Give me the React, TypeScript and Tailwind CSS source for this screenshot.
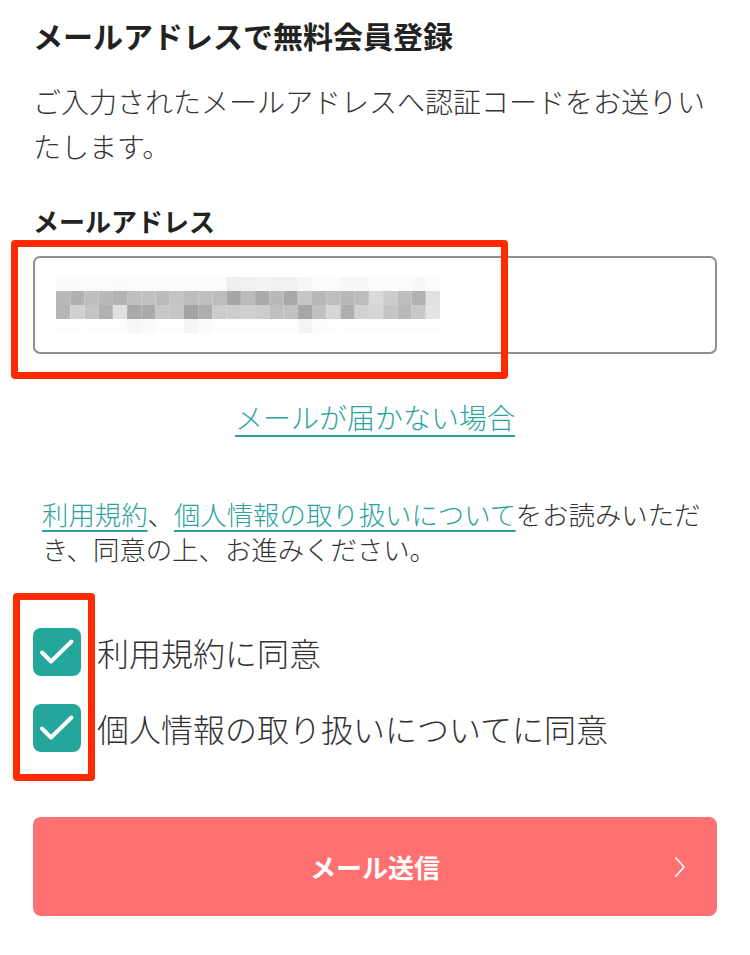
const MOSAIC_ROWS: string[][] = [
  ["#fafafa", "#fafafa", "#fbfbfb", "#fbfbfb", "#fafafa", "#fbfbfb", "#fbfbfb", "#fbfbfb", "#fcfcfc", "#fbfbfb", "#fbfbfb", "#fbfbfb", "#eeeeee", "#f0f0f0", "#f2f2f2", "#f1f1f1", "#f0f0f0", "#f6f6f6", "#fbfbfb", "#fbfbfb", "#f6f6f6", "#f7f7f7", "#fbfbfb", "#fbfbfb", "#fbfbfb", "#f8f8f8", "#fcfcfc"],
  ["#b8b8b8", "#b0b0b0", "#bdbdbd", "#b9b9b9", "#b3b3b3", "#bebebe", "#c0c0c0", "#bbbbbb", "#c4c4c4", "#bcbcbc", "#bfbfbf", "#bcbcbc", "#a6a6a6", "#bcbcbc", "#aaaaaa", "#b9b9b9", "#a8a8a8", "#c6c6c6", "#b8b8b8", "#bebebe", "#b9b9b9", "#bdbdbd", "#dadada", "#cccccc", "#bdbdbd", "#b1b1b1", "#e0e0e0"],
  ["#b5b5b5", "#d0d0d0", "#c3c3c3", "#b1b1b1", "#e0e0e0", "#a9a9a9", "#aaaaaa", "#c8c8c8", "#c6c6c6", "#a3a3a3", "#aeaeae", "#cbcbcb", "#cdcdcd", "#cfcfcf", "#cccccc", "#bfbfbf", "#c1c1c1", "#a7a7a7", "#c1c1c1", "#d6d6d6", "#aeaeae", "#d2d2d2", "#d6d6d6", "#c4c4c4", "#b8b8b8", "#c8c8c8", "#e4e4e4"],
  ["#fdfdfd", "#fdfdfd", "#fdfdfd", "#fdfdfd", "#fdfdfd", "#f6f6f6", "#fafafa", "#fdfdfd", "#fdfdfd", "#f5f5f5", "#fafafa", "#fdfdfd", "#fdfdfd", "#fdfdfd", "#fdfdfd", "#fdfdfd", "#fdfdfd", "#f4f4f4", "#fbfbfb", "#fdfdfd", "#fdfdfd", "#fdfdfd", "#fdfdfd", "#fdfdfd", "#fdfdfd", "#fdfdfd", "#fdfdfd"],
];

function BlurredEmail() {
  return (
    <svg width="384" height="56" viewBox="0 0 378 56" preserveAspectRatio="none" aria-hidden="true">
      {MOSAIC_ROWS.map((row, r) =>
        row.map((color, c) => (
          <rect key={`${r}-${c}`} x={c * 14} y={r * 14} width="14" height="14" fill={color} />
        ))
      )}
    </svg>
  );
}

function CheckBox() {
  return (
    <span className="flex h-[48px] w-[48px] shrink-0 items-center justify-center rounded-[8px] bg-[#24a69b]">
      <svg width="48" height="48" viewBox="0 0 48 48" fill="none" aria-hidden="true">
        <path
          d="M9 24.5 L18 33.5 L38.5 13.5"
          stroke="#ffffff"
          strokeWidth="4"
          strokeLinecap="round"
          strokeLinejoin="round"
        />
      </svg>
    </span>
  );
}

export default function App() {
  return (
    <div
      className="relative min-h-[955px] w-[750px] bg-white px-[33px] pt-[15px] text-[#333333]"
      style={{ fontFamily: '"Noto Sans CJK JP", "Noto Sans", sans-serif' }}
    >
      <h1 className="text-[30px] font-bold leading-[40px] text-[#222222]">
        メールアドレスで無料会員登録
      </h1>

      <p className="mt-[24px] text-[28px] font-light leading-[45px]">
        ご入力されたメールアドレスへ認証コードをお送りいたします。
      </p>

      <label className="mt-[34px] block text-[26px] font-bold leading-[36px] text-[#222222]">
        メールアドレス
      </label>

      <div className="mt-[17px] flex h-[98px] items-center rounded-[7px] border-2 border-[#8f8f8f] pl-[21px]">
        <BlurredEmail />
      </div>

      <div className="mt-[43px] flex justify-center">
        <a className="text-[28px] font-light leading-[40px] text-[#2aa3a0] underline decoration-[1.5px] underline-offset-[6px]">
          メールが届かない場合
        </a>
      </div>

      <p className="mt-[59px] pl-[9px] pr-[8px] text-[26.4px] font-light leading-[35px]">
        <a className="text-[#2aa3a0] underline decoration-[1.5px] underline-offset-[5px]">利用規約</a>
        、
        <a className="text-[#2aa3a0] underline decoration-[1.5px] underline-offset-[5px]">
          個人情報の取り扱いについて
        </a>
        をお読みいただき、同意の上、お進みください。
      </p>

      <div className="mt-[62px] flex flex-col gap-[28px]">
        <div className="flex items-center gap-[16px]">
          <CheckBox />
          <span className="text-[32px] font-light leading-[48px]">利用規約に同意</span>
        </div>
        <div className="flex items-center gap-[16px]">
          <CheckBox />
          <span className="text-[32px] font-light leading-[48px]">個人情報の取り扱いについてに同意</span>
        </div>
      </div>

      <button
        type="button"
        className="relative mt-[65px] flex h-[99px] w-full items-center justify-center rounded-[8px] bg-[#ff7070] text-[26px] font-bold text-white"
      >
        メール送信
        <svg
          className="absolute right-[31px] top-1/2 -translate-y-1/2"
          width="12"
          height="22"
          viewBox="0 0 12 22"
          fill="none"
          aria-hidden="true"
        >
          <path d="M2 2 L10 11 L2 20" stroke="#ffffff" strokeWidth="1.8" strokeLinecap="round" strokeLinejoin="round" />
        </svg>
      </button>

      <div className="pointer-events-none absolute left-[11px] top-[240px] h-[139px] w-[497px] rounded-[4px] border-[7px] border-[#ff2a00]" />
      <div className="pointer-events-none absolute left-[13px] top-[593px] h-[188px] w-[82px] rounded-[4px] border-[7px] border-[#ff2a00]" />
    </div>
  );
}
